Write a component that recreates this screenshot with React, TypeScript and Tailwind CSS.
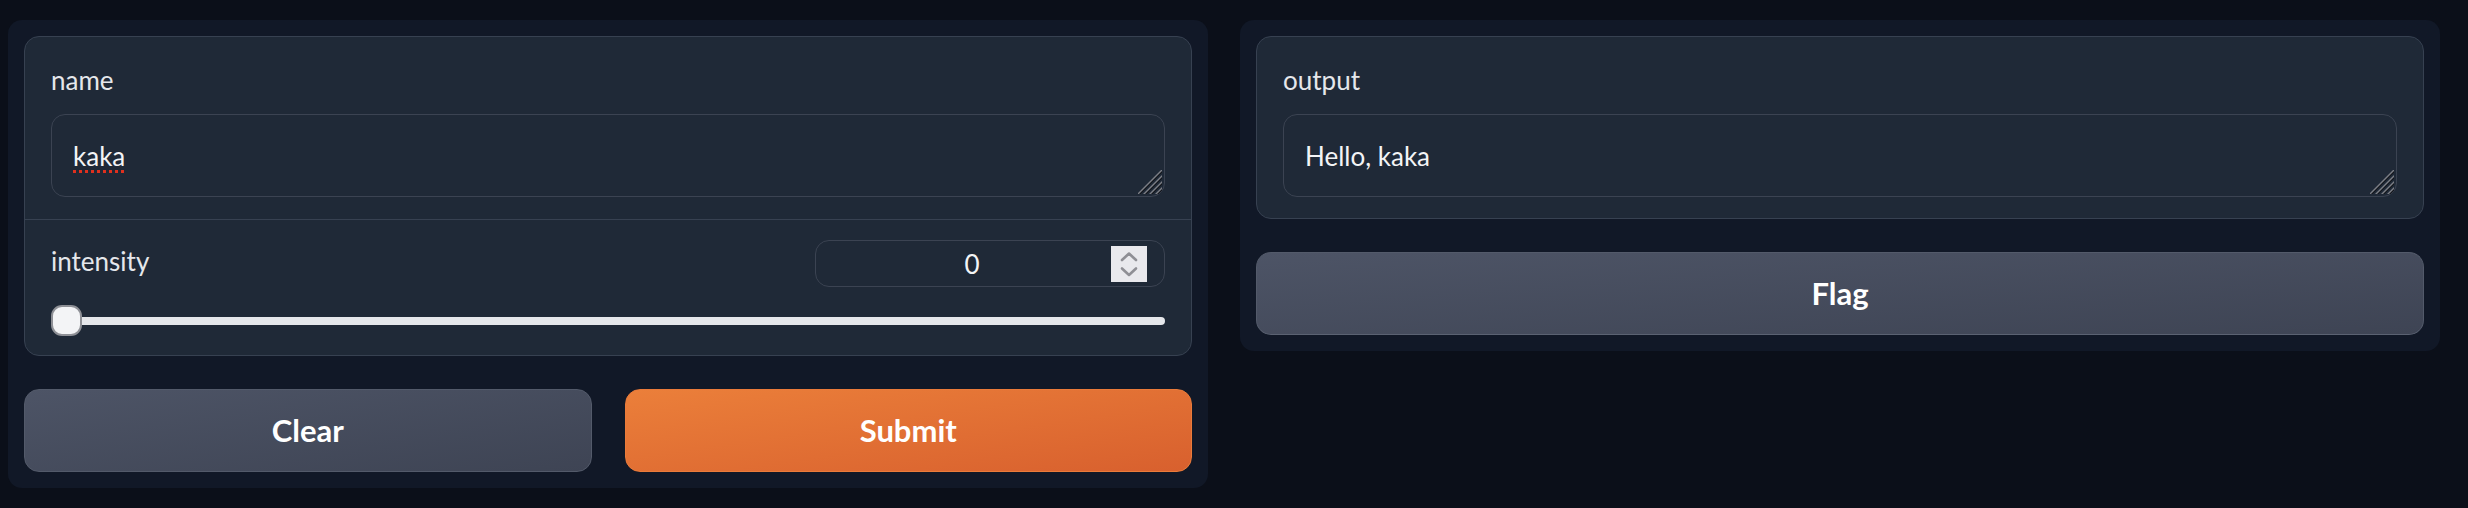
import React from "react";

function ResizeHandle() {
  return (
    <svg
      width="24"
      height="24"
      viewBox="0 0 24 24"
      className="absolute right-[2px] bottom-[2px]"
    >
      <g strokeWidth="1.4" strokeLinecap="square">
        <line x1="24" y1="1.5" x2="1.5" y2="24" stroke="#111318" />
        <line x1="24" y1="0" x2="0" y2="24" stroke="#7c7f86" />
        <line x1="24" y1="7.5" x2="7.5" y2="24" stroke="#111318" />
        <line x1="24" y1="6" x2="6" y2="24" stroke="#7c7f86" />
        <line x1="24" y1="13.5" x2="13.5" y2="24" stroke="#111318" />
        <line x1="24" y1="12" x2="12" y2="24" stroke="#7c7f86" />
        <line x1="24" y1="19.5" x2="19.5" y2="24" stroke="#111318" />
        <line x1="24" y1="18" x2="18" y2="24" stroke="#7c7f86" />
      </g>
    </svg>
  );
}

function TextBox({ children }: { children: React.ReactNode }) {
  return (
    <div className="relative h-[83px] rounded-[14px] border border-[#3b4352] bg-[#1f2937] px-[21px] pt-[23px] text-[26px] leading-[36px] text-[#f3f4f6]">
      {children}
      <ResizeHandle />
    </div>
  );
}

function Spinner() {
  return (
    <div className="flex h-[36px] w-[36px] items-center justify-center bg-[#e9e9ed]">
      <svg width="36" height="36" viewBox="0 0 36 36" fill="none">
        <polyline
          points="11,14 18,7.5 25,14"
          stroke="#8f8f95"
          strokeWidth="2.6"
          strokeLinecap="round"
          strokeLinejoin="round"
        />
        <polyline
          points="11,22.5 18,29 25,22.5"
          stroke="#8f8f95"
          strokeWidth="2.6"
          strokeLinecap="round"
          strokeLinejoin="round"
        />
      </svg>
    </div>
  );
}

export default function App() {
  return (
    <div className="min-h-screen bg-[#0b0f19] font-['Lato','Noto_Sans',sans-serif]">
      <div className="flex items-start gap-[32px] pl-[8px] pr-[28px] pt-[20px]">
        {/* Left panel */}
        <div className="flex flex-1 flex-col gap-[33px] rounded-[14px] bg-[#111827] p-[16px]">
          <div className="rounded-[15px] border border-[#374151] bg-[#1f2937]">
            <div className="flex flex-col gap-[16px] px-[26px] pt-[25px] pb-[22px]">
              <span className="text-[26px] leading-[36px] text-[#e5e7eb]">name</span>
              <TextBox>
                <span className="underline decoration-[#e0301e] decoration-dotted decoration-[3px] underline-offset-[4px]">
                  kaka
                </span>
              </TextBox>
            </div>
            <div className="h-px bg-[#374151]" />
            <div className="flex flex-col gap-[18px] px-[26px] pt-[20px] pb-[19px]">
              <div className="flex items-start justify-between">
                <span className="mt-[3px] text-[26px] leading-[36px] text-[#e5e7eb]">intensity</span>
                <div className="flex h-[47px] w-[350px] items-center rounded-[14px] border border-[#3b4352] bg-[#1f2937] pr-[17px] pl-[17px]">
                  <span className="flex-1 text-center text-[26px] leading-[36px] text-[#f3f4f6]">0</span>
                  <Spinner />
                </div>
              </div>
              <div className="relative flex h-[31px] items-center">
                <div className="h-[8px] w-full rounded-full bg-[#e5e7eb]" />
                <div className="absolute left-0 top-0 h-[31px] w-[31px] rounded-[11px] border-2 border-[#8e9096] bg-[#f3f4f6]" />
              </div>
            </div>
          </div>
          <div className="grid grid-cols-2 gap-[33px]">
            <button className="h-[83px] rounded-[15px] border border-[#535a6a] bg-gradient-to-br from-[#4d5466] to-[#3e4454] text-[31px] font-bold text-white">
              Clear
            </button>
            <button className="h-[83px] rounded-[15px] border border-[#ea7b3a] bg-gradient-to-br from-[#eb7f3a] to-[#d8602e] text-[31px] font-bold text-white">
              Submit
            </button>
          </div>
        </div>

        {/* Right panel */}
        <div className="flex flex-1 flex-col gap-[33px] rounded-[14px] bg-[#111827] p-[16px]">
          <div className="rounded-[15px] border border-[#374151] bg-[#1f2937]">
            <div className="flex flex-col gap-[16px] px-[26px] pt-[25px] pb-[21px]">
              <span className="text-[26px] leading-[36px] text-[#e5e7eb]">output</span>
              <TextBox>Hello, kaka</TextBox>
            </div>
          </div>
          <button className="h-[83px] rounded-[15px] border border-[#535a6a] border-b-[#5b6272] bg-gradient-to-br from-[#4d5466] to-[#3e4454] text-[31px] font-bold text-white">
            Flag
          </button>
        </div>
      </div>
    </div>
  );
}
